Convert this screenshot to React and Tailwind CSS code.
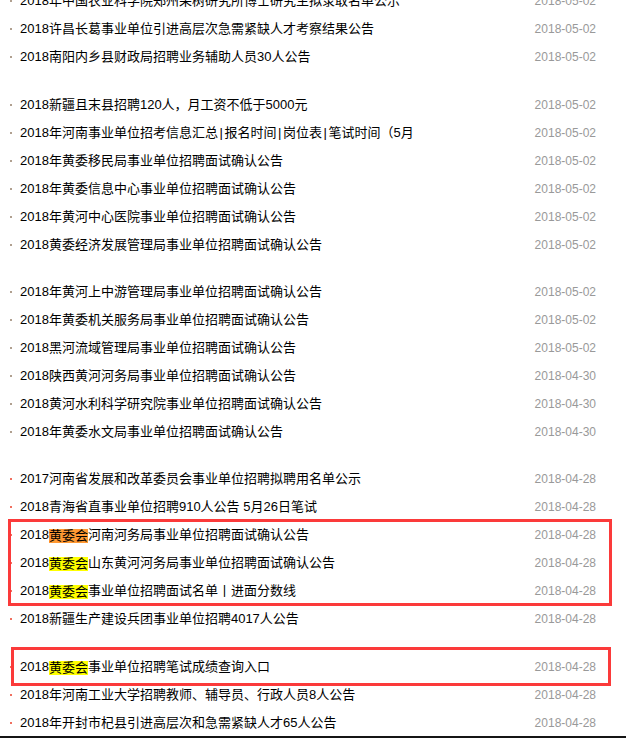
const groups = [
  {
    gap: '',
    rows: [
      { t: '2018年中国农业科学院郑州果树研究所博士研究生拟录取名单公示', d: '2018-05-02' },
      { t: '2018许昌长葛事业单位引进高层次急需紧缺人才考察结果公告', d: '2018-05-02' },
      { t: '2018南阳内乡县财政局招聘业务辅助人员30人公告', d: '2018-05-02' },
    ],
  },
  {
    gap: 'mt-[20px]',
    rows: [
      { t: '2018新疆且末县招聘120人，月工资不低于5000元', d: '2018-05-02' },
      { t: 'bars', d: '2018-05-02' },
      { t: '2018年黄委移民局事业单位招聘面试确认公告', d: '2018-05-02' },
      { t: '2018年黄委信息中心事业单位招聘面试确认公告', d: '2018-05-02' },
      { t: '2018年黄河中心医院事业单位招聘面试确认公告', d: '2018-05-02' },
      { t: '2018黄委经济发展管理局事业单位招聘面试确认公告', d: '2018-05-02' },
    ],
  },
  {
    gap: 'mt-[19px]',
    rows: [
      { t: '2018年黄河上中游管理局事业单位招聘面试确认公告', d: '2018-05-02' },
      { t: '2018年黄委机关服务局事业单位招聘面试确认公告', d: '2018-05-02' },
      { t: '2018黑河流域管理局事业单位招聘面试确认公告', d: '2018-05-02' },
      { t: '2018陕西黄河河务局事业单位招聘面试确认公告', d: '2018-04-30' },
      { t: '2018黄河水利科学研究院事业单位招聘面试确认公告', d: '2018-04-30' },
      { t: '2018年黄委水文局事业单位招聘面试确认公告', d: '2018-04-30' },
    ],
  },
]

function Dot({ red }) {
  return <span className={`w-[2px] h-[2px] shrink-0 ${red ? 'bg-[#f07060]' : 'bg-[#b0a090]'}`} />
}

function Row({ children, date, red }) {
  return (
    <li className="flex items-center h-[28px] pl-[10px] pr-[30px]">
      <Dot red={red} />
      <span className="ml-[8px] flex-1 whitespace-nowrap overflow-hidden text-[13px] text-black leading-[28px]">
        {children}
      </span>
      <span className="text-[12px] text-[#999999] leading-[28px]">{date}</span>
    </li>
  )
}

function Hl({ orange }) {
  return (
    <span className={`inline-block leading-[14px] h-[14px] align-[-1px] ${orange ? 'bg-[#ff9933]' : 'bg-[#ffff00]'}`}>
      黄委会
    </span>
  )
}

// half-width cell for the pipe separators, full-width cell for the paren
function Bar() {
  return <span className="inline-block w-[6.5px] text-center">|</span>
}

function BarsTitle() {
  return (
    <>
      2018年河南事业单位招考信息汇总<Bar />报名时间<Bar />岗位表<Bar />笔试时间
      <span className="inline-block w-[13px] text-right">（</span>5月
    </>
  )
}

export default function App() {
  return (
    <div
      className="h-[738px] w-full bg-white flex flex-col overflow-hidden"
      style={{ fontFamily: '"Liberation Sans", "Noto Sans CJK SC", sans-serif' }}
    >
      <div className="flex-1 overflow-hidden">
        <div className="-mt-[13px]">
          {groups.map((g, i) => (
            <ul key={i} className={g.gap}>
              {g.rows.map((r, j) => (
                <Row key={j} date={r.d}>{r.t === 'bars' ? <BarsTitle /> : r.t}</Row>
              ))}
            </ul>
          ))}

          <ul className="mt-[19px]">
            <Row red date="2018-04-28">2017河南省发展和改革委员会事业单位招聘拟聘用名单公示</Row>
            <Row red date="2018-04-28">2018青海省直事业单位招聘910人公告 5月26日笔试</Row>
            <div className="relative">
              <Row red date="2018-04-28">2018<Hl orange />河南河务局事业单位招聘面试确认公告</Row>
              <Row red date="2018-04-28">2018<Hl />山东黄河河务局事业单位招聘面试确认公告</Row>
              <Row red date="2018-04-28">2018<Hl />事业单位招聘面试名单丨进面分数线</Row>
              <div className="absolute top-[-2px] bottom-[-1px] left-[8px] right-[14px] border-[3px] border-[#fb3a3a] pointer-events-none" />
            </div>
            <Row red date="2018-04-28">2018新疆生产建设兵团事业单位招聘4017人公告</Row>
          </ul>

          <ul className="mt-[20px]">
            <div className="relative">
              <Row red date="2018-04-28">2018<Hl />事业单位招聘笔试成绩查询入口</Row>
              <div className="absolute top-[-6px] bottom-[-5px] left-[11px] right-[15px] border-[3px] border-[#fb3a3a] pointer-events-none" />
            </div>
            <Row red date="2018-04-28">2018年河南工业大学招聘教师、辅导员、行政人员8人公告</Row>
            <Row red date="2018-04-28">2018年开封市杞县引进高层次和急需紧缺人才65人公告</Row>
          </ul>
        </div>
      </div>
      <div className="h-[2px] shrink-0 bg-[#151515]" />
    </div>
  )
}
